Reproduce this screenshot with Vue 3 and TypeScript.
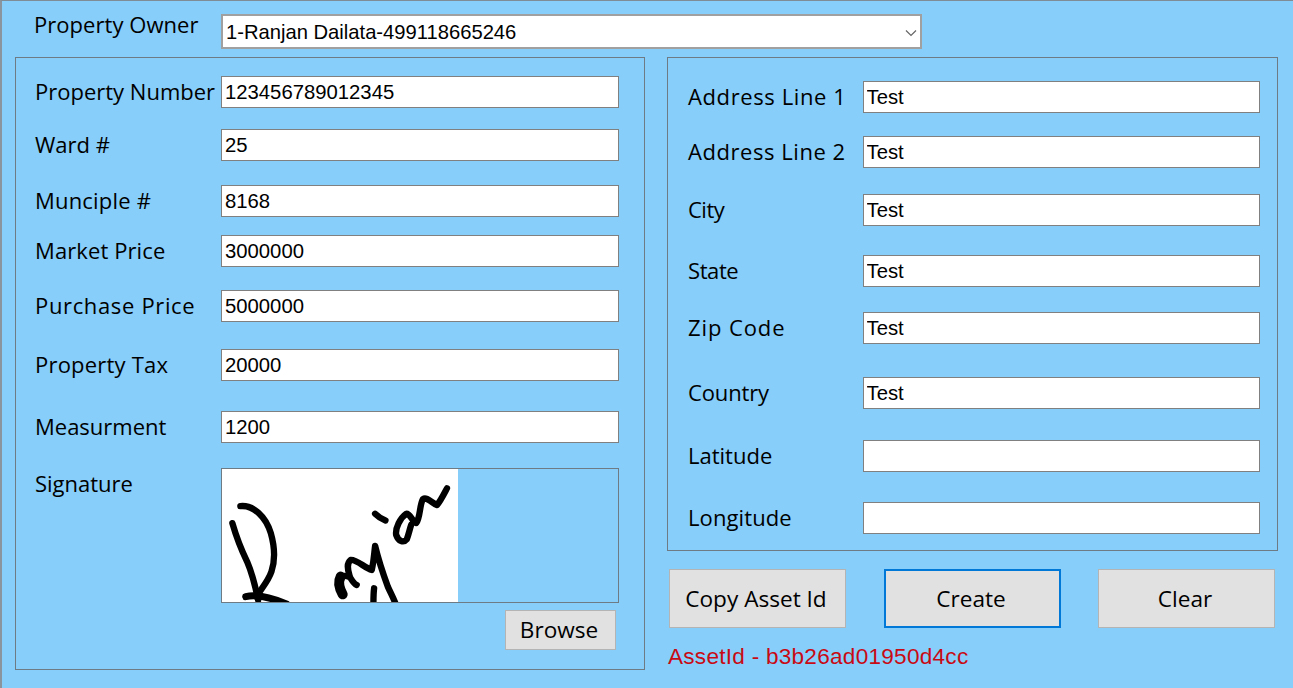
<script setup lang="ts">
interface Row { label: string; value: string; gap: number; track?: number }

const leftRows: Row[] = [
  { label: 'Property Number', value: '123456789012345', gap: 18 },
  { label: 'Ward #', value: '25', gap: 21 },
  { label: 'Munciple #', value: '8168', gap: 24, track: 0.2 },
  { label: 'Market Price', value: '3000000', gap: 18, track: 0.1 },
  { label: 'Purchase Price', value: '5000000', gap: 23, track: 0.65 },
  { label: 'Property Tax', value: '20000', gap: 27, track: 0.2 },
  { label: 'Measurment', value: '1200', gap: 30 },
]
const rightRows: Row[] = [
  { label: 'Address Line 1', value: 'Test', gap: 23, track: 0.6 },
  { label: 'Address Line 2', value: 'Test', gap: 23, track: 0.55 },
  { label: 'City', value: 'Test', gap: 26, track: -0.5 },
  { label: 'State', value: 'Test', gap: 29, track: -0.4 },
  { label: 'Zip Code', value: 'Test', gap: 25, track: 0.9 },
  { label: 'Country', value: 'Test', gap: 33, track: -0.15 },
  { label: 'Latitude', value: '', gap: 31 },
  { label: 'Longitude', value: '', gap: 30, track: 0.1 },
]
</script>

<template>
  <div class="page">
    <div class="owner">
      <span class="owner-label">Property Owner</span>
      <div class="select-wrap">
        <select class="select">
          <option>1-Ranjan Dailata-499118665246</option>
        </select>
        <svg class="chevron" width="12" height="8" viewBox="0 0 12 8">
          <path d="M1 1.5 L6 6.5 L11 1.5" fill="none" stroke="#666" stroke-width="1.2" />
        </svg>
      </div>
    </div>

    <div class="columns">
      <section class="panel panel-left">
        <div v-for="row in leftRows" :key="row.label" class="row row-left" :style="{ marginTop: row.gap + 'px' }">
          <label class="label" :style="{ letterSpacing: (row.track ?? 0) + 'px' }">{{ row.label }}</label>
          <input class="input" :value="row.value" />
        </div>
        <div class="row-left sig-row">
          <label class="label sig-label">Signature</label>
          <div class="sig-box">
            <svg class="sig" viewBox="37 28 706 398" preserveAspectRatio="none">
              <rect x="37" y="28" width="706" height="398" fill="#fff" />
              <g fill="none" stroke="#000" stroke-width="19" stroke-linecap="round" stroke-linejoin="round">
                <path d="M68 190 C78 225 95 270 112 305 C125 335 135 370 145 420" />
                <path d="M92 139 C130 135 168 170 183 220 C195 262 195 305 185 335 C175 365 155 385 140 410" />
                <path d="M108 410 C130 405 165 405 230 432" stroke-width="21" />
                <path d="M418 345 C412 325 410 310 422 300 C440 298 465 325 485 330 C492 300 492 280 495 258 C505 300 520 345 533 380 C542 400 550 415 558 435" />
                <path d="M392 350 C405 345 415 350 420 352 C428 365 432 372 440 375" />
                <path d="M398 403 C388 385 384 365 392 350" stroke-width="30" />
                <path d="M492 385 C490 400 490 415 490 435" stroke-width="19" />
                <path d="M495 162 C505 172 515 178 526 182" stroke-width="19" />
                <path d="M710 86 C700 105 690 125 680 136 C665 130 650 110 638 118 C628 135 630 175 618 190 C605 185 600 160 588 162 C570 175 555 205 558 225 C565 245 580 250 590 238 C595 225 598 210 603 195" />
              </g>
            </svg>
          </div>
        </div>
        <div class="browse-row">
          <button class="btn browse">Browse</button>
        </div>
      </section>

      <div class="right-col">
        <section class="panel panel-right">
          <div v-for="row in rightRows" :key="row.label" class="row row-right" :style="{ marginTop: row.gap + 'px' }">
            <label class="label" :style="{ letterSpacing: (row.track ?? 0) + 'px' }">{{ row.label }}</label>
            <input class="input" :value="row.value" />
          </div>
        </section>
        <div class="actions">
          <button class="btn action">Copy Asset Id</button>
          <button class="btn action primary">Create</button>
          <button class="btn action">Clear</button>
        </div>
        <div class="asset">AssetId - b3b26ad01950d4cc</div>
      </div>
    </div>
  </div>
</template>

<style>
html, body { margin: 0; background: #87cefa; }
</style>

<style scoped>
.page {
  box-sizing: border-box;
  width: 1293px;
  height: 688px;
  overflow: hidden;
  background: #87cefa;
  border-top: 1px solid #7f8c96;
  border-left: 2px solid #8a949c;
  padding: 13px 0 0 13px;
  font-family: "Open Sans", "Noto Sans", sans-serif;
  color: #000;
}
.owner {
  display: flex;
  height: 35px;
}
.owner-label {
  width: 206px;
  padding-left: 19px;
  box-sizing: border-box;
  font-size: 22px;
  line-height: 20px;
  letter-spacing: 0.05px;
  white-space: nowrap;
}
.select-wrap {
  position: relative;
  width: 701px;
  height: 35px;
}
.select {
  appearance: none;
  width: 100%;
  height: 100%;
  box-sizing: border-box;
  border: 2px solid #a0a0a0;
  border-radius: 0;
  background: #fff;
  padding: 0 0 0 3px;
  font-family: "Liberation Sans", Arial, sans-serif;
  font-size: 20.2px;
  color: #000;
  outline: none;
}
.chevron {
  position: absolute;
  right: 5px;
  top: 15px;
}
.columns {
  display: flex;
  align-items: flex-start;
  margin-top: 8px;
  gap: 22px;
}
.panel {
  box-sizing: border-box;
  border: 1px solid #6e7b85;
}
.panel-left {
  width: 630px;
  height: 613px;
  padding-left: 19px;
}
.panel-right {
  width: 611px;
  height: 494px;
  padding-left: 20px;
}
.right-col {
  width: 611px;
}
.row {
  display: grid;
  align-items: center;
  height: 32px;
}
.row-left,
.sig-row {
  grid-template-columns: 186px 398px;
}
.row-right {
  grid-template-columns: 175px 398px;
}
.label {
  font-size: 22px;
  line-height: 24px;
  margin-bottom: 2px;
  white-space: nowrap;
}
.input {
  box-sizing: border-box;
  width: 398px;
  height: 32px;
  border: 1px solid #808080;
  border-radius: 0;
  background: #fff;
  padding: 0 2px 0 3px;
  font-family: "Liberation Sans", Arial, sans-serif;
  font-size: 20.3px;
  color: #000;
  outline: none;
}
.row-right .input {
  width: 397px;
  padding-left: 2.5px;
}
.sig-row {
  display: grid;
  margin-top: 25px;
  height: 135px;
}
.sig-label {
  margin-top: 3px;
}
.sig-box {
  box-sizing: border-box;
  width: 398px;
  height: 135px;
  border: 1px solid #6e7b85;
  overflow: hidden;
}
.sig {
  display: block;
  width: 236px;
  height: 133px;
}
.browse-row {
  display: flex;
  justify-content: flex-end;
  width: 581px;
  margin-top: 7px;
}
.btn {
  box-sizing: border-box;
  background: #e1e1e1;
  border: 1px solid #b4b4b4;
  border-radius: 0;
  color: #000;
  padding: 0 3px 0 0;
  font-family: "Open Sans", "Noto Sans", sans-serif;
  font-size: 22.6px;
}
.browse {
  width: 111px;
  height: 40px;
  padding-bottom: 2px;
}
.actions {
  display: flex;
  margin-top: 18px;
  margin-left: 2px;
  gap: 38px;
}
.action {
  width: 177px;
  height: 59px;
}
.action.primary {
  border: 2px solid #0078d7;
}
.action:last-child {
  margin-left: -1px;
}
.asset {
  margin-top: 17px;
  margin-left: 1px;
  font-family: "Liberation Sans", Arial, sans-serif;
  font-size: 22.6px;
  line-height: 24px;
  color: #c80a14;
  letter-spacing: 0.25px;
}
</style>
